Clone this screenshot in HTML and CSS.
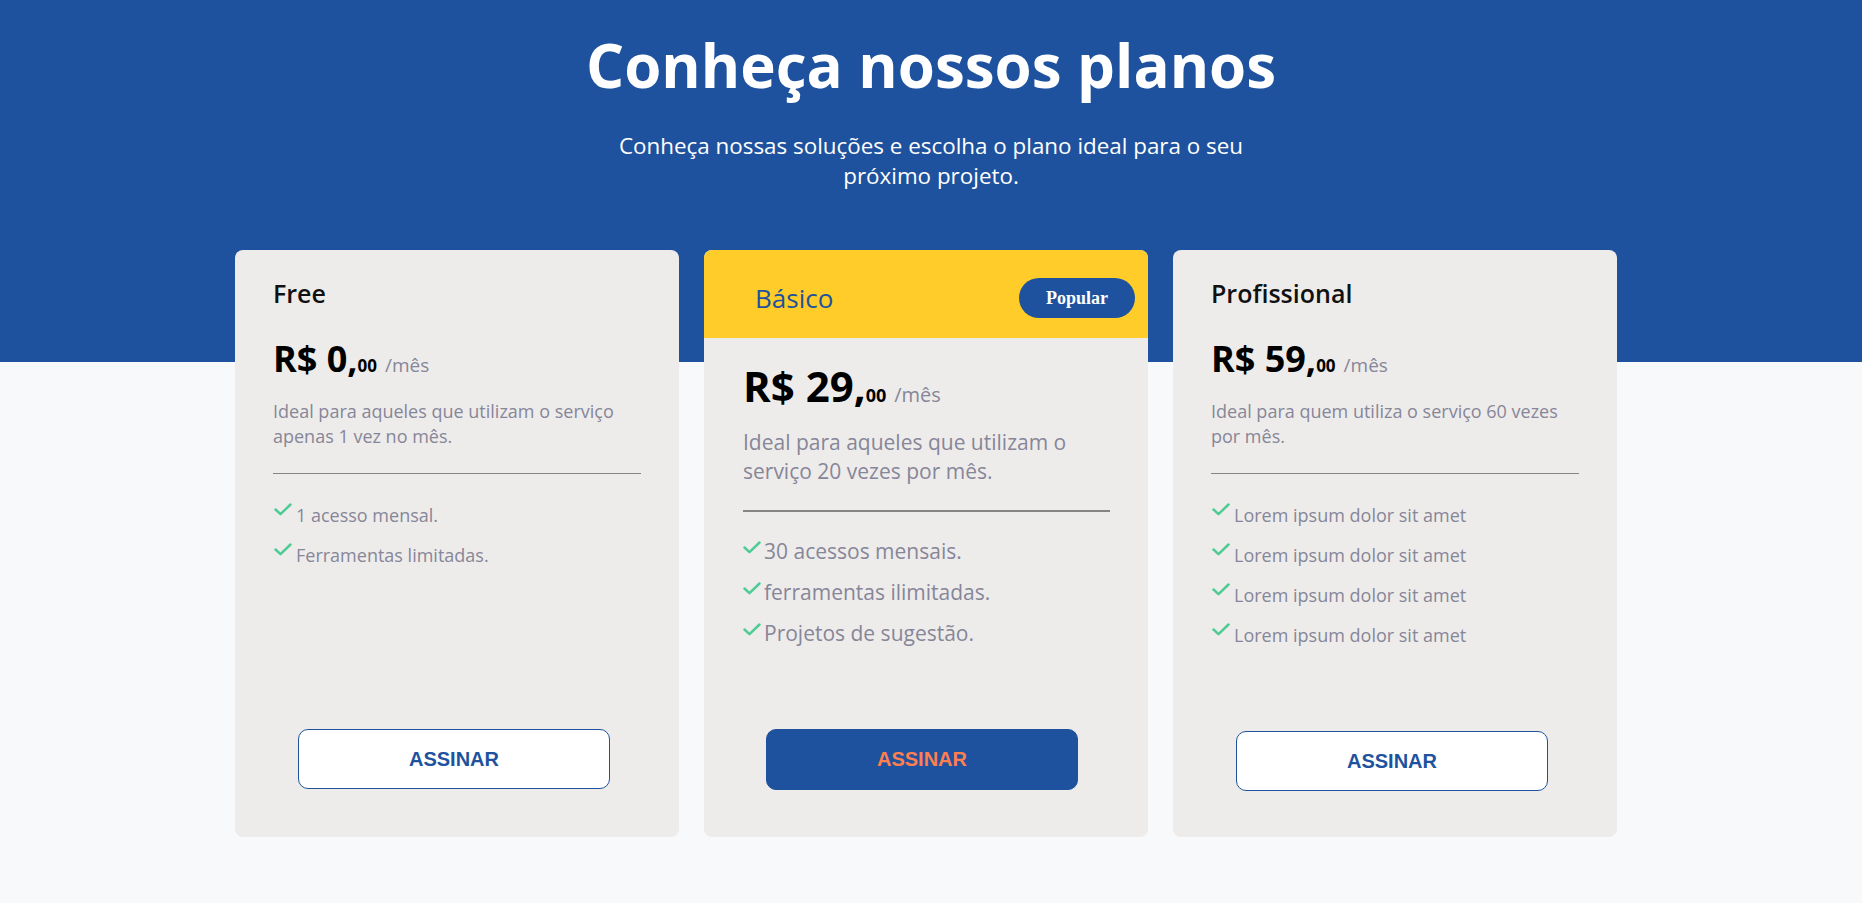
FILE: index.html
```html
<!DOCTYPE html>
<html lang="pt-BR">
<head>
<meta charset="utf-8">
<title>Conheça nossos planos</title>
<link rel="stylesheet" href="styles.css">
</head>
<body>
<div class="page">
  <header class="hero">
    <h1 class="hero-title">Conheça nossos planos</h1>
    <p class="hero-sub">Conheça nossas soluções e escolha o plano ideal para o seu próximo projeto.</p>
  </header>

  <section class="plans">
    <article class="plan">
      <div class="plan-head">
        <h2 class="plan-name">Free</h2>
      </div>
      <div class="plan-body">
        <div class="plan-price"><span class="amount">R$ 0,</span><span class="cents">00</span><span class="period">/mês</span></div>
        <p class="plan-desc">Ideal para aqueles que utilizam o serviço apenas 1 vez no mês.</p>
        <hr class="plan-divider">
        <ul class="plan-features">
          <li><svg class="check" viewBox="0 0 18 13"><path d="M1.5 6.5 L6.5 11.2 L16.5 1.5"/></svg>1 acesso mensal.</li>
          <li><svg class="check" viewBox="0 0 18 13"><path d="M1.5 6.5 L6.5 11.2 L16.5 1.5"/></svg>Ferramentas limitadas.</li>
        </ul>
        <button class="plan-btn">ASSINAR</button>
      </div>
    </article>

    <article class="plan plan-featured">
      <div class="plan-head">
        <h2 class="plan-name">Básico</h2>
        <span class="badge">Popular</span>
      </div>
      <div class="plan-body">
        <div class="plan-price"><span class="amount">R$ 29,</span><span class="cents">00</span><span class="period">/mês</span></div>
        <p class="plan-desc">Ideal para aqueles que utilizam o serviço 20 vezes por mês.</p>
        <hr class="plan-divider">
        <ul class="plan-features">
          <li><svg class="check" viewBox="0 0 18 13"><path d="M1.5 6.5 L6.5 11.2 L16.5 1.5"/></svg>30 acessos mensais.</li>
          <li><svg class="check" viewBox="0 0 18 13"><path d="M1.5 6.5 L6.5 11.2 L16.5 1.5"/></svg>ferramentas ilimitadas.</li>
          <li><svg class="check" viewBox="0 0 18 13"><path d="M1.5 6.5 L6.5 11.2 L16.5 1.5"/></svg>Projetos de sugestão.</li>
        </ul>
        <button class="plan-btn plan-btn-solid">ASSINAR</button>
      </div>
    </article>

    <article class="plan">
      <div class="plan-head">
        <h2 class="plan-name">Profissional</h2>
      </div>
      <div class="plan-body">
        <div class="plan-price"><span class="amount">R$ 59,</span><span class="cents">00</span><span class="period">/mês</span></div>
        <p class="plan-desc">Ideal para quem utiliza o serviço 60 vezes por mês.</p>
        <hr class="plan-divider">
        <ul class="plan-features">
          <li><svg class="check" viewBox="0 0 18 13"><path d="M1.5 6.5 L6.5 11.2 L16.5 1.5"/></svg>Lorem ipsum dolor sit amet</li>
          <li><svg class="check" viewBox="0 0 18 13"><path d="M1.5 6.5 L6.5 11.2 L16.5 1.5"/></svg>Lorem ipsum dolor sit amet</li>
          <li><svg class="check" viewBox="0 0 18 13"><path d="M1.5 6.5 L6.5 11.2 L16.5 1.5"/></svg>Lorem ipsum dolor sit amet</li>
          <li><svg class="check" viewBox="0 0 18 13"><path d="M1.5 6.5 L6.5 11.2 L16.5 1.5"/></svg>Lorem ipsum dolor sit amet</li>
        </ul>
        <button class="plan-btn plan-btn-low">ASSINAR</button>
      </div>
    </article>
  </section>
</div>
</body>
</html>
```

FILE: styles.css
```css
* { box-sizing: border-box; }

html, body {
  margin: 0;
  padding: 0;
}

body {
  font-family: "Open Sans", "Liberation Sans", sans-serif;
  background: #f8f9fb;
}

.page {
  min-height: 903px;
  background: linear-gradient(to bottom, #1e529e 0, #1e529e 362px, #f8f9fb 362px);
  padding-bottom: 40px;
}

.hero {
  display: flex;
  flex-direction: column;
  align-items: center;
  padding-top: 29px;
  color: #ffffff;
  text-align: center;
}

.hero-title {
  margin: 0;
  font-size: 60px;
  line-height: 72px;
  font-weight: 700;
}

.hero-sub {
  margin: 30px 0 0;
  max-width: 670px;
  font-size: 22.4px;
  line-height: 30px;
  font-weight: 400;
}

.plans {
  display: flex;
  justify-content: center;
  gap: 25px;
  margin-top: 59px;
  padding-right: 10px;
}

.plan {
  width: 444px;
  height: 587px;
  background: #eeecea;
  border-radius: 8px;
  overflow: hidden;
  display: flex;
  flex-direction: column;
}

.plan-head {
  display: flex;
  align-items: center;
  justify-content: space-between;
  padding: 27px 38px 0;
}

.plan-name {
  margin: 0;
  font-size: 25px;
  line-height: 32px;
  font-weight: 600;
  color: #111111;
}

.plan-body {
  flex: 1;
  display: flex;
  flex-direction: column;
  padding: 28px 38px 48px;
}

.plan-price {
  line-height: 44px;
  color: #000000;
  white-space: nowrap;
}

.amount {
  font-size: 36px;
  font-weight: 700;
}

.cents {
  font-size: 17px;
  font-weight: 700;
}

.period {
  margin-left: 8px;
  font-size: 19px;
  color: #868699;
}

.plan-desc {
  margin: 11px 0 0;
  font-size: 18px;
  line-height: 25px;
  color: #868699;
}

.plan-divider {
  margin: 24px 0 0;
  border: 0;
  border-top: 1px solid #858585;
  height: 0;
}

.plan-features {
  list-style: none;
  margin: 21px 0 0;
  padding: 0;
  font-size: 18px;
  line-height: 40px;
  color: #868699;
}

.check {
  display: inline-block;
  width: 18px;
  height: 13px;
  margin: 0 4px 0 1px;
  vertical-align: 6px;
  fill: none;
  stroke: #4fcb95;
  stroke-width: 2.5;
  stroke-linecap: round;
  stroke-linejoin: round;
}

.plan-btn {
  margin: auto 0 0 25px;
  width: 312px;
  height: 60px;
  background: #ffffff;
  border: 1px solid #1e529e;
  border-radius: 10px;
  font-family: "Liberation Sans", Arial, sans-serif;
  font-size: 20px;
  font-weight: 700;
  color: #1e529e;
  cursor: pointer;
}

.plan-btn-solid {
  background: #1e529e;
  color: #ff7f50;
  height: 61px;
}

.plan-btn-low {
  margin-bottom: -1px;
  position: relative;
  top: 1px;
}

/* featured plan */
.plan-featured .plan-head {
  height: 88px;
  padding: 8px 13px 0 51px;
  background: #ffcc29;
}

.plan-featured .plan-name {
  color: #1e529e;
  font-size: 26px;
  font-weight: 500;
}

.badge {
  display: inline-flex;
  align-items: center;
  justify-content: center;
  width: 116px;
  height: 40px;
  border-radius: 20px;
  background: #1e529e;
  color: #ffffff;
  font-family: "Liberation Serif", "Times New Roman", serif;
  font-size: 18px;
  font-weight: 700;
}

.plan-featured .plan-body {
  padding: 23px 38px 47px 39px;
}

.plan-featured .plan-price {
  line-height: 50px;
}

.plan-featured .amount {
  font-size: 42px;
}

.plan-featured .cents {
  font-size: 18px;
}

.plan-featured .period {
  margin-left: 8px;
  font-size: 20px;
}

.plan-featured .plan-desc {
  margin-top: 7px;
  font-size: 21px;
  line-height: 29px;
}

.plan-featured .plan-divider {
  margin-top: 24px;
  border-top-width: 2px;
}

.plan-featured .plan-features {
  margin-top: 19px;
  font-size: 21px;
  line-height: 41px;
}

.plan-featured .check {
  margin: 0 3px 0 0;
  vertical-align: 5px;
}

.plan-featured .plan-btn {
  margin-left: 23px;
}
```
